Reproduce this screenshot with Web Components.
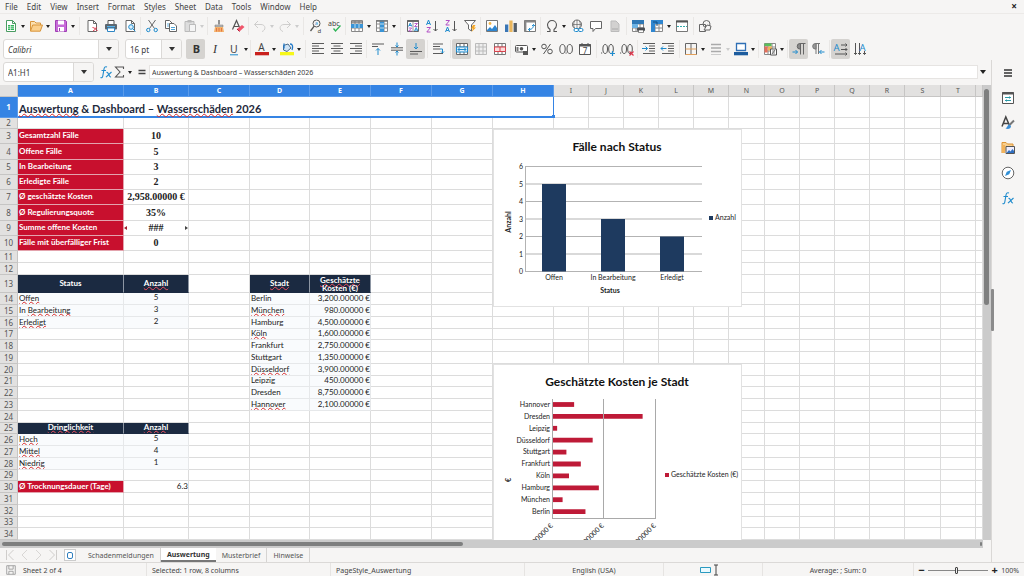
<!DOCTYPE html>
<html lang="en">
<head>
<meta charset="utf-8">
<title>Spreadsheet – Auswertung</title>
<style>
html,body{margin:0;height:100%}
body{font:8px "Noto Sans","Open Sans",sans-serif;color:#3a3a3a;background:#f6f5f4;overflow:hidden}
</style>
</head>
<body>
<app-window></app-window>
<script>
const C={g:'#5b5b5b',b:'#2f7fbf',l:'#1e8bcd',r:'#e0364c',p:'#b14fc5'};
const lines=(rows,c=C.g)=>rows.map(([x,y,w])=>`<path d="M${x} ${y}h${w}" stroke="${c}"/>`).join('');
const page='<path d="M3 1.5h5.500l3 3v8H3z" fill="#fff" stroke="#666"/><path d="M8.500 1.500v3h3" stroke="#666"/>';
const table=(c,f='#fff')=>`<path d="M1.500 1.500h11v11h-11z" fill="${f}" stroke="${c}"/><path d="M1.500 5h11M1.500 9h11M5 1.500v11M9 1.500v11" stroke="${c}"/>`;
const ICONS={
 'new':'<path d="M2.500 1.500h6l3 3v8h-9z" fill="#fff" stroke="#4a9c62"/><path d="M8.500 1.500v3h3" stroke="#4a9c62"/><path d="M4 6h6v5H4z" fill="#2fb457"/><path d="M4 7.700h6M4 9.300h6M6.500 6v5" stroke="#fff" stroke-width=".6"/>',
 open:'<path d="M1.500 12V2.500h4l1.500 1.500h4.500v2" fill="#fbe0b0" stroke="#d9963c"/><path d="M1.500 12.200L3.700 6h9.800l-2.200 6.200z" fill="#fbd08c" stroke="#d9963c"/>',
 save:'<path d="M1.500 1.500h10l1 1v10h-11z" fill="#c76bd8" stroke="#a040b5"/><path d="M4 1.500h6v4H4z" fill="#fff"/><path d="M4 8h6v4.500H4z" fill="#fff"/><path d="M5.500 9v3" stroke="#a040b5"/>',
 pdf:page+'<path d="M7.500 8.500c2 0 3.500 2 5 3.500M8 12c1.500-1 3-2 3.500-4" stroke="#e0364c"/>',
 print:'<path d="M4 5V1.500h6V5" fill="#fff" stroke="#555"/><rect x="1" y="5" width="12" height="5.500" rx="1" fill="#5d6770"/><path d="M3 7.500h8" stroke="#56b1e8"/><path d="M3.500 9h7v3.500h-7z" fill="#fff" stroke="#2f86c4"/>',
 preview:page+'<circle cx="8" cy="8" r="2.300" fill="#dff1fc" stroke="#1e8bcd"/><path d="M9.700 9.700l2.800 2.800" stroke="#1e8bcd"/>',
 cut:'<path d="M3.500 1l6 8.500M10.500 1l-6 8.500" stroke="#666"/><circle cx="3.300" cy="11" r="1.700" stroke="#1e8bcd"/><circle cx="10.700" cy="11" r="1.700" stroke="#1e8bcd"/>',
 copy:'<path d="M1.500 1.500h4l2.500 2.500v5.500H1.500z" fill="#fff" stroke="#666"/><path d="M3 5h2M3 7h2" stroke="#1e8bcd" stroke-width=".7"/><path d="M5.500 4.500h4.500l2.500 2.500v5.500h-7z" fill="#fff" stroke="#666"/><path d="M7 8.500h4M7 10.500h4" stroke="#1e8bcd" stroke-width=".8"/>',
 paste:'<path d="M2 2.500h9v10H2z" fill="#ddd" stroke="#bbb"/><path d="M4.500 1h4v2.500h-4z" fill="#bbb"/><path d="M6.500 5.500h6v7h-6z" fill="#f5f5f5" stroke="#bbb"/>',
 clone:'<path d="M7 1v4.500" stroke="#888" stroke-width="1.800"/><path d="M3 6h8v2H3z" fill="#bbb" stroke="#777" stroke-width=".5"/><path d="M3 8h8l1 5H2z" fill="#f3b36b"/><path d="M4.500 9v3.500M7 9v3.500M9.500 9v3.500" stroke="#e0623c" stroke-width=".8"/>',
 clear:'<path d="M1.500 10.500L5.500 1.500l3.500 8M3 7.500h4.500" stroke="#555" stroke-width="1.200"/><path d="M6 10l5-4 2.500 2-5 4.500z" fill="#f0566b"/><path d="M6 10l2.500 2.500" stroke="#b51f38"/>',
 undo:'<path d="M5 2L1.500 5.500 5 9M1.500 5.500H8c5 0 5 6 1 7" stroke="#cfcecd"/>',
 redo:'<path d="M9 2l3.500 3.500L9 9M12.500 5.500H6c-5 0-5 6-1 7" stroke="#cfcecd"/>',
 find:'<circle cx="7.500" cy="4.500" r="3.500" stroke="#555"/><path d="M5.200 7.200L1.500 12" stroke="#555" stroke-width="1.300"/><text x="6" y="6" font-size="5" fill="#1e8bcd">a</text><text x="8.500" y="13.500" font-size="6" fill="#444">d</text>',
 spell:'<text x="0" y="6.500" font-size="7" fill="#444">abc</text><path d="M5.500 9.500l2 2.500 5-5.500" stroke="#2fb457" stroke-width="1.300"/>',
 row:table('#888')+'<path d="M1 5h12v4H1z" fill="#3a94d6"/><path d="M1 3h12" stroke="#777" stroke-width="1.500"/><path d="M5 5v4M9 5v4" stroke="#bde"/>',
 col:table('#888')+'<path d="M5 1h4v12H5z" fill="#3a94d6"/><path d="M5 5h4M5 9h4" stroke="#bde"/><path d="M1 2h12" stroke="#777" stroke-width="1.500"/>',
 sort:'<path d="M1.500 1.500h11v11h-11z" fill="#fff" stroke="#666"/><path d="M1 2.200h12" stroke="#666" stroke-width="1.500"/><path d="M7 3v10" stroke="#999"/><path d="M2.500 7.500L4.200 4 5.800 7.500M3 6.500h2.500M8.500 12l1.700-3.500 1.600 3.500M9 11h2.500" stroke="#1e8bcd" stroke-width=".9"/><path d="M2.700 9h3l-3 3h3M8.500 4.500h3l-3 3h3" stroke="#b14fc5" stroke-width=".9"/>',
 asc:'<path d="M1.500 6L3.500 1l2 5M2.200 4.500h2.600" stroke="#1e8bcd"/><path d="M1.800 8.500h3.700l-3.700 4.500h3.700" stroke="#b14fc5"/><path d="M10.500 2v10M8.500 10l2 2 2-2" stroke="#555"/>',
 desc:'<path d="M1.500 13l2-5 2 5M2.200 11.500h2.600" stroke="#1e8bcd"/><path d="M1.800 1.500h3.700L1.800 6h3.700" stroke="#b14fc5"/><path d="M10.500 2v10M8.500 10l2 2 2-2" stroke="#555"/>',
 filter:'<path d="M1.500 1.500h11L8.500 6v6l-3-2V6z" fill="#fff" stroke="#666"/><path d="M10 6l-2 3.500h2L8.500 13 13 8.500h-2L12.500 6z" fill="#f5a623"/>',
 image:'<path d="M1.500 1.500h11v11h-11z" fill="#fff" stroke="#777"/><path d="M2 11l3-3 2 2 3-4 2 3v3H2z" fill="#2f86d0"/><circle cx="5" cy="4.500" r="1.400" fill="#f5b547"/>',
 chart:'<path d="M1 5.500h3.300V13H1z" fill="#3b76b5"/><path d="M5.300 1.500h3.300V13H5.300z" fill="#eab65c"/><path d="M9.600 4h3.300v9H9.600z" fill="#555f69"/>',
 pivot:'<path d="M1.500 1.500h11v11h-11z" fill="#fff" stroke="#777"/><path d="M1.500 2.500h11M2.500 1.500v11" stroke="#888" stroke-width="1.800"/><path d="M5.500 10.500c4 0 5-2 5-5M9 7l1.500-1.500L12 7M7 9l-1.500 1.500L7 12" stroke="#1e8bcd"/>',
 omega:'<path d="M2 12.500h3v-2C3.500 9.500 2.500 8 2.500 6a4.500 4.500 0 0 1 9 0c0 2-1 3.500-2.500 4.500v2h3" stroke="#555" stroke-width="1.100"/>',
 link:'<circle cx="7" cy="5.500" r="4.500" stroke="#666"/><path d="M2.500 5.500h9M7 1v9M4.500 2c-1 2-1 5 0 7M9.500 2c1 2 1 5 0 7" stroke="#666" stroke-width=".7"/><rect x="4" y="9.500" width="4.500" height="3" rx="1.500" fill="#fff" stroke="#1e8bcd"/><rect x="8.500" y="9.500" width="4.500" height="3" rx="1.500" fill="#fff" stroke="#1e8bcd"/>',
 comment:'<path d="M1.500 2.500h11v7H6.500l-2.500 3v-3H1.500z" fill="#fff" stroke="#666"/>',
 doc:'<path d="M3 2h5l3 3v7.500H3z" fill="#d2d1d0" stroke="#bbb"/><path d="M4 10h6" stroke="#aaa"/>',
 parea:table('#888')+'<path d="M1 1h12v4H1z" fill="#2f78b5"/><path d="M1 5h6v4H1z" fill="#6db3e4"/><rect x="6" y="8.500" width="8" height="3.500" rx="1" fill="#4a4f55"/><path d="M7.500 11h5v2.500h-5z" fill="#fff" stroke="#444" stroke-width=".6"/>',
 freeze:table('#888')+'<path d="M1 1h12v4H1z" fill="#2f86d0"/><path d="M1 5h4v8H1z" fill="#2f86d0"/><path d="M3 3h4v4" stroke="#124f80"/>',
 split:'<path d="M1.500 2h11v10.500h-11z" fill="#fff" stroke="#777"/><path d="M1 2.500h12" stroke="#555" stroke-width="2"/><path d="M2 7.500h10" stroke="#3aa" stroke-dasharray="2 1"/>',
 shapes:'<path d="M1.500 5.500h6v7h-6z" stroke="#666"/><circle cx="8.500" cy="5" r="3.500" stroke="#666"/><path d="M6 11l3-5 4 1-1 4z" fill="#f6f5f4" stroke="#666"/>',
 bold:'<text x="3.700" y="11" font-size="11" font-weight="bold" fill="#333">B</text>',
 italic:'<text x="5" y="11" font-size="12" font-style="italic" fill="#333" style="font-family:Liberation Serif">I</text>',
 under:'<text x="3" y="10.500" font-size="10.500" fill="#444">U</text><path d="M3 12.800h8" stroke="#1e8bcd"/>',
 acolor:'<text x="3.300" y="8.700" font-size="10" fill="#444">A</text><path d="M0 10h14v3.300H0z" fill="#c9211e"/>',
 hcolor:'<path d="M3.500 8V3.500L8 2l3 4-4 3.500z" fill="#cfe3f4" stroke="#4a6a8a"/><path d="M4 1.500v5M10 2c3 0 3 3 2 6" stroke="#1e78c8" stroke-width="1.300"/><path d="M0 10h14v3.300H0z" fill="#f7f719"/>',
 left:lines([[1,1.5,12],[1,4,7],[1,6.5,12],[1,9,7],[1,11.5,12]]),
 center:lines([[1,1.5,12],[3.5,4,7],[1,6.5,12],[3.5,9,7],[1,11.5,12]]),
 right:lines([[1,1.5,12],[6,4,7],[1,6.5,12],[6,9,7],[1,11.5,12]]),
 top:lines([[1,2,12],[1,4.5,6]])+'<path d="M7 13V6.500M5 8.500l2-2 2 2" stroke="#1e8bcd"/>',
 mid:lines([[1,5.8,12],[1,8.2,12]])+'<path d="M7 .5V5M5.500 3.500L7 5l1.500-1.500M7 13.500V9M5.500 10.500L7 9l1.500 1.500" stroke="#1e8bcd"/>',
 bot:lines([[1,9.5,12],[1,12,8]])+'<path d="M7 1v6M5 5l2 2 2-2" stroke="#1e8bcd"/>',
 wrap:lines([[1,2,10],[1,4.5,7],[1,7,7],[1,11.5,10]])+'<path d="M8 7h2.500v4M9 9.500l1.500 1.500 1.500-1.500" stroke="#1e8bcd"/>',
 merge:table('#666')+'<path d="M1.500 5h11v5h-11z" fill="#dff0fb" stroke="#1e8bcd"/><path d="M3 7.500h8M4.500 6L3 7.500 4.500 9M9.500 6L11 7.500 9.500 9" stroke="#1e8bcd"/>',
 merge2:table('#bbb','#eee'),
 unmerge:table('#777')+'<path d="M1.500 5h11v4.500h-11zM7 5v4.500" fill="#fbdcdc" stroke="#d8424c"/>',
 money:'<rect x=".5" y="3.500" width="12" height="6.500" rx="1" fill="#fff" stroke="#555"/><circle cx="6.500" cy="6.700" r="1.800" fill="#555"/><path d="M8 9h5v4H8z" fill="#555"/><path d="M1.500 5v4h2V5z" fill="#777"/>',
 percent:'<circle cx="4" cy="4.500" r="2.300" stroke="#555"/><circle cx="10" cy="9.500" r="2.300" stroke="#555"/><path d="M10.500 2L3.500 12" stroke="#555"/>',
 decimal:'<ellipse cx="3.500" cy="7" rx="2.700" ry="4.500" stroke="#555"/><ellipse cx="10.700" cy="7" rx="2.700" ry="4.500" stroke="#555"/><path d="M6.500 11h1.200" stroke="#555"/>',
 date:'<path d="M1.500 2.500h11v10h-11z" fill="#fff" stroke="#555"/><path d="M1 3.500h12" stroke="#555" stroke-width="2"/><path d="M4 1v2M10 1v2" stroke="#555"/><text x="4.800" y="11.500" font-size="8" fill="#444">7</text>',
 adddec:'<ellipse cx="4.200" cy="7" rx="2.300" ry="4.500" stroke="#555"/><ellipse cx="10" cy="7" rx="2.300" ry="4.500" stroke="#555"/><path d="M0 11h1.200" stroke="#555"/><path d="M9 11.500h5M11.500 9v5" stroke="#1e8bcd" stroke-width="1.200"/>',
 deldec:'<ellipse cx="4.200" cy="7" rx="2.300" ry="4.500" stroke="#555"/><ellipse cx="10" cy="7" rx="2.300" ry="4.500" stroke="#555"/><path d="M0 11h1.200" stroke="#555"/><path d="M9.500 9.500l4 4M13.500 9.500l-4 4" stroke="#e0364c" stroke-width="1.200"/>',
 indent:lines([[1,1.5,12],[7,4,6],[7,6.5,6],[7,9,6],[1,11.5,12]])+'<path d="M0 6.500h5.500M3.500 4.500l2 2-2 2" stroke="#1e8bcd"/>',
 dedent:lines([[1,1.5,12],[7,4,6],[7,6.5,6],[7,9,6],[1,11.5,12]])+'<path d="M5.500 6.500H0M2 4.500l-2 2 2 2" stroke="#1e8bcd"/>',
 borders:'<path d="M1.500 1.500h11v11h-11zM7 1.500v11" stroke="#666"/><path d="M1.500 7h11M1.500 12.500h11" stroke="#e3a05a"/>',
 bstyle:'<path d="M2 2.500h10M2 6h10M2 9.500h10" stroke="#aaa" stroke-width="1.500"/><path d="M2 12.500h10" stroke="#ccc"/>',
 bcolor:'<path d="M2.500 1.500h9v7h-9z" fill="#fff" stroke="#2f6fb5" stroke-width="1.300"/><path d="M0 10h14v3.300H0z" fill="#1d5c9e"/>',
 cond:table('#888')+'<path d="M1.500 1.500h7v2.500h-7z" fill="#5bbf5b"/><path d="M1.500 4.500h3v6h-3z" fill="#e86f5b"/><path d="M5 4.500h4v4H5z" fill="#f0b45b"/><path d="M7.500 7h6v6h-6z" fill="#fff" stroke="#555"/><path d="M9 9h3M9 11h3M12 8l-3 4" stroke="#555" stroke-width=".7"/>',
 ltr:'<path d="M8.500 12.500V1.500M11.500 12.500V1.500M13.500 1.500H8" stroke="#666"/><path d="M8.500 1.500H8a2.800 2.800 0 0 0 0 5.600h.5z" fill="#888" stroke="#666"/><path d="M.5 10h5M3.500 8l2 2-2 2" stroke="#1e8bcd"/>',
 rtl:'<path d="M5 12V1.500M7.500 12V1.500M9 1.500H4.500" stroke="#777"/><path d="M5 1.500h-.5a2.800 2.800 0 0 0 0 5.600H5z" fill="#999" stroke="#777"/><path d="M13.500 10h-5M10.500 8l-2 2 2 2" stroke="#1e8bcd"/>',
 hdir:'<text x="-.5" y="9" font-size="9.500" fill="#1e8bcd">A</text><path d="M7 3h6M11.500 1.500L13 3l-1.500 1.500M7 7.500h6M11.500 6L13 7.500 11.500 9M1 12h12M11.500 10.500L13 12l-1.500 1.500" stroke="#555"/>',
 vdir:'<path d="M2.500 1v11.500M1 11l1.500 1.500L4 11M6.500 1v11.500M5 11l1.500 1.500L8 11M11.500 9v3.500M10 11l1.500 1.500L13 11" stroke="#555"/><text x="6.500" y="8.500" font-size="9.500" fill="#1e8bcd">A</text>',
 fx:'<path d="M8 2c-2-.8-2.700.3-3 2L3.800 11c-.3 1.500-1 2-2.300 1.500M2.500 5.500h4.500" stroke="#1e8bcd" stroke-width="1.100"/><path d="M7.500 7.500c2-1 2.500 5 4.500 4.500M12.500 7L7 12.200" stroke="#1e8bcd" stroke-width="1.100"/>',
 sum:'<path d="M10.500 4V2h-8L7 7l-4.500 5h8v-2" stroke="#555" stroke-width="1.100"/>',
 eq:'<path d="M3.500 5.500h7M3.500 8.500h7" stroke="#444" stroke-width="1.300"/>',
 menu:'<path d="M3 4h8M3 7h8M3 10h8" stroke="#333" stroke-width="1.300"/>',
 props:'<path d="M1.500 1.500h11v11h-11z" fill="#fff" stroke="#555"/><path d="M1 2.500h12" stroke="#555" stroke-width="2"/><path d="M4 6.500h6M4 9.500h6M8.500 5.500v2M5.500 8.500v2" stroke="#2a9aa8"/>',
 styles:'<path d="M1 10.500L4.800 1l3.500 8M2.500 7.500h5" stroke="#444" stroke-width="1.500"/><path d="M13 4.500L8.500 9" stroke="#777" stroke-width="2"/><path d="M8.500 8.500c-2 0-2 3-4 4 3 1 5.500 0 5.500-2.500z" fill="#3b8ed6"/>',
 gallery:'<path d="M1 12V1.500h4L6.500 3H12v2" fill="#f8cf8e" stroke="#dd9434"/><path d="M1 12V4h3v8z" fill="#f3b35b"/><path d="M5 5.500h8.500v7H5z" fill="#eef" stroke="#555"/><path d="M5.500 12l2.500-3 1.500 1.500L11.500 8l1.500 2v2z" fill="#2f6fc0"/>',
 nav:'<circle cx="7" cy="7" r="5.800" fill="#fff" stroke="#666"/><path d="M10 4L8.200 8.200 4 10l1.800-4.200z" fill="#2f8fd6"/>',
 disk:'<path d="M2 2h10v10H2z" stroke="#999"/><path d="M4.500 2v4h5V2M4.500 12V8.500h5V12" stroke="#999"/>',
 sel:'<path d="M1.500 4.500h10v5h-10z" fill="#eafaff" stroke="#2a9ac0"/>',
 ibeam:'<path d="M1 2h4M1 12h4M3 2v10" stroke="#444"/>',
 first:'<path d="M2.500 2v10M9.500 2l-5 5 5 5" stroke="#cfcdcb"/>',
 prev:'<path d="M9 2L4 7l5 5" stroke="#d8d6d4"/>',
 next:'<path d="M5 2l5 5-5 5" stroke="#d8d6d4"/>',
 last:'<path d="M11.500 2v10M4.500 2l5 5-5 5" stroke="#cfcdcb"/>',
};

const define=(name,css,html)=>{
 customElements.define(name,class extends HTMLElement{
  connectedCallback(){
   if(this.shadowRoot)return;
   const tpl=document.createElement('template');
   tpl.innerHTML=`<style>*{box-sizing:border-box}button,input{font:inherit;color:inherit;border:0;padding:0;margin:0;background:none;min-width:0}${css}</style>${typeof html==='function'?html(this):html}`;
   this.attachShadow({mode:'open'}).append(tpl.content.cloneNode(true));
  }
 });
};

define('ui-icon',':host{display:block;flex:none;width:14px;height:14px}svg{display:block;width:100%;height:100%;overflow:visible}text{font-family:"Noto Sans";stroke:none}',
 el=>`<svg viewBox="0 0 14 14" fill="none" aria-hidden="true">${ICONS[el.getAttribute('name')]||''}</svg>`);

define('tool-button',`:host{display:flex;flex:none;align-items:center;width:19px}
:host([menu]){width:25px}
.b{width:19px;height:20px;display:grid;place-items:center;border-radius:2px}
:host([active]) .b{background:#d5d3d0}
.m{width:6px;height:20px;display:grid;place-items:center}
.m::after{content:"";border:2px solid transparent;border-top:3px solid #222;border-bottom:0}
:host([off]) .m::after{border-top-color:#ccc}`,
 el=>{const l=el.getAttribute('label');return `<button class="b" aria-label="${l}"><ui-icon name="${el.getAttribute('icon')}"></ui-icon></button>${el.hasAttribute('menu')?`<button class="m" aria-label="${l}: options"></button>`:''}`});

define('tool-separator',':host{display:flex;flex:none;width:4px;height:18px;justify-content:center}:host([narrow]){width:3px}:host([wide]){width:6px}i{width:1px;background:#e9e7e5}','<i></i>');

define('combo-box',`:host{display:flex;flex:none;height:20px;width:var(--w,116px);background:#fff;border:1px solid #dbd9d7;border-radius:3px;overflow:hidden}
input{flex:1;padding:0 4px;outline:0}
button{width:20px;background:#f6f5f4;border-left:1px solid #dbd9d7;display:grid;place-items:center}
button::after{content:"";border:3px solid transparent;border-top:4px solid #333;border-bottom:0}`,
 el=>`<input aria-label="${el.getAttribute('label')}" value="${el.getAttribute('value')}"><button aria-label="${el.getAttribute('label')}: list"></button>`);

define('menu-bar',`:host{display:flex;flex:none;height:14px;align-items:center;padding:0 5px;border-bottom:1px solid #eceae8}
nav{display:flex;gap:9px;flex:1}button{height:13px;line-height:13px;color:#444}.x{width:10px;font-weight:bold;font-size:10px;color:#222}`,
 `<nav>${['File','Edit','View','Insert','Format','Styles','Sheet','Data','Tools','Window','Help'].map(t=>`<button>${t}</button>`).join('')}</nav><button class="x" aria-label="Close">×</button>`);

const B=(icon,label,o='')=>`<tool-button icon="${icon}" label="${label}" ${o}></tool-button>`;
const S=(o='')=>`<tool-separator ${o}></tool-separator>`;
const bar=':host{display:flex;align-items:center;flex:none;overflow:hidden}';
define('standard-toolbar',bar+':host{height:24px;padding-left:1px}',
 B('new','New','menu')+B('open','Open','menu')+B('save','Save','menu')+S('wide')+
 B('pdf','Export PDF')+B('print','Print')+B('preview','Preview')+S('narrow')+
 B('cut','Cut')+B('copy','Copy')+B('paste','Paste','menu off')+S()+B('clone','Clone formatting')+B('clear','Clear formatting')+S('narrow')+
 B('undo','Undo','menu off')+B('redo','Redo','menu off')+S('wide')+B('find','Find')+B('spell','Spelling')+S('narrow')+
 B('row','Row','menu')+B('col','Column','menu')+S('wide')+B('sort','Sort')+B('asc','Sort ascending')+B('desc','Sort descending')+B('filter','AutoFilter')+S('narrow')+
 B('image','Image')+B('chart','Chart')+B('pivot','Pivot table')+S('narrow')+B('omega','Symbol','menu')+B('link','Link')+B('comment','Comment')+B('doc','Header and footer')+S()+
 B('parea','Print area')+B('freeze','Freeze','menu')+B('split','Split window')+S()+B('shapes','Shapes'));
define('format-toolbar',bar+':host{height:22px;padding-left:3px}.size{--w:57px;margin:0 4px 0 6px}.name{font-style:italic}',
 `<combo-box class="name" label="Font name" value="Calibri"></combo-box><combo-box class="size" label="Font size" value="16 pt"></combo-box>`+
 B('bold','Bold','active')+B('italic','Italic')+B('under','Underline','menu')+S('narrow')+B('acolor','Font color','menu')+B('hcolor','Background color','menu')+S('wide')+
 B('left','Align left')+B('center','Center')+B('right','Align right')+S('narrow')+B('top','Align top')+B('mid','Center vertically')+B('bot','Align bottom','active')+S()+
 B('wrap','Wrap text')+S()+B('merge','Merge and center','active')+B('merge2','Merge')+B('unmerge','Unmerge')+S('narrow')+
 B('money','Currency','menu')+B('percent','Percent')+B('decimal','Number')+B('date','Date')+S()+B('adddec','Add decimal')+B('deldec','Delete decimal')+S('narrow')+
 B('indent','Increase indent')+B('dedent','Decrease indent')+S()+B('borders','Borders','menu')+B('bstyle','Border style','menu off')+B('bcolor','Border color','menu')+S()+
 B('cond','Conditional','menu')+S()+B('ltr','Left to right','active')+B('rtl','Right to left')+S()+B('hdir','Horizontal text','active')+B('vdir','Vertical text'));

define('formula-bar',`:host{display:flex;align-items:center;flex:none;height:25px;padding:0 3px 1px}
combo-box{--w:91px;margin-right:5px}.t{display:flex;align-items:center;width:14px;height:14px}.m{width:6px;height:14px;display:grid;place-items:center;margin-right:2px}
.m::after,.e::after{content:"";border:2px solid transparent;border-top:3px solid #222;border-bottom:0}
input{flex:1;height:14px;background:#fff;border:1px solid #e6e4e2;padding:0 2px;font-size:7px;outline:0}
.e{width:10px;height:14px;display:grid;place-items:center}.e::after{border-width:4px 3px 0}`,
 `<combo-box label="Name box" value="A1:H1"></combo-box><button class="t" aria-label="Function wizard"><ui-icon name="fx"></ui-icon></button><button class="t" aria-label="Sum"><ui-icon name="sum"></ui-icon></button><button class="m" aria-label="Sum: options"></button><button class="t" aria-label="Formula"><ui-icon name="eq"></ui-icon></button><input aria-label="Formula" value="Auswertung &amp; Dashboard – Wasserschäden 2026"><button class="e" aria-label="Expand"></button>`);

/* ---- sheet ---- */
const u=t=>`<u>${t}</u>`;
const COLS=[18,106,65,61,60,61,61,61,61,35,35,35,35,35,36,35,35,35,35,36,35];
const LET='ABCDEFGHIJKLMNOPQRST';
const rowH=r=>r===1?21:r===2?11:r<=10?([4,8].includes(r)?16:15):r===13?18:[17,21,25,29,33].includes(r)?11:12;
const cells={};
const put=(a,c,t)=>cells[a]=[c,t];
[['Gesamtzahl Fälle','10'],['Offene Fälle','5'],['In Bearbeitung','3'],['Erledigte Fälle','2'],['Ø geschätzte Kosten','2,958.00000 €'],['Ø Regulierungsquote','35%'],['Summe offene Kosten','<s></s>###<s class="r"></s>'],['Fälle mit überfälliger Frist','0']].forEach(([a,b],i)=>{put('A'+(i+3),'red',a);put('B'+(i+3),'kpi',b)});
put('A13','navy','Status');put('B13','navy',u('Anzahl'));put('D13','navy',u('Stadt'));put('E13','navy two',u('Geschätzte')+'<br>'+u('Kosten')+' (€)');
[[u('Offen'),5],['In '+u('Bearbeitung'),3],[u('Erledigt'),2]].forEach(([a,b],i)=>{put('A'+(14+i),'band',a);put('B'+(14+i),'band c',b)});
[['Berlin','3,200'],[u('München'),'980'],['Hamburg','4,500'],[u('Köln'),'1,600'],['Frankfurt','2,750'],['Stuttgart','1,350'],[u('Düsseldorf'),'3,900'],['Leipzig','450'],['Dresden','8,750'],[u('Hannover'),'2,100']].forEach(([a,b],i)=>{put('D'+(14+i),'band',a);put('E'+(14+i),'band n',b+'.00000 €')});
put('A25','navy',u('Dringlichkeit'));put('B25','navy',u('Anzahl'));
[['Hoch',5],['Mittel',4],['Niedrig',1]].forEach(([a,b],i)=>{put('A'+(26+i),'band',u(a));put('B'+(26+i),'band c',b)});
put('A30','red','Ø Trocknungsdauer (Tage)');put('B30','n','6.3');

const sheetRows=()=>{let h='';for(let r=1;r<=34;r++){
 h+=`<tr style="height:${rowH(r)}px"><th scope="row"${r===1?' class="on"':''}>${r}</th>`;
 if(r===1)h+=`<td colspan="8" class="title">${u('Auswertung')} &amp; Dashboard – ${u('Wasserschäden')} 2026<b></b></td>`;
 for(let c=r===1?8:0;c<20;c++){const k=cells[LET[c]+r];h+=k?`<td class="${k[0]}">${k[1]}</td>`:'<td></td>'}
 h+='<td></td></tr>'}return h};

define('sheet-grid',`:host{display:block;position:relative;overflow:hidden;background:#fff;font:8px Lato,sans-serif;color:#222}
table{table-layout:fixed;width:100%;border-collapse:separate;border-spacing:0}
tr{height:12px}
th,td{padding:0 0 1px;border:0 solid #dcdcdc;border-width:0 1px 1px 0;line-height:9px;white-space:nowrap;vertical-align:middle;text-align:left;overflow:hidden}
th{background:#e2e1e0;color:#555;font:8px/9px "Noto Sans",sans-serif;text-align:center;border-color:#c6c5c4}
thead th{font-size:7px;padding:0}
th.on{background:#3584e4;color:#fff;font-weight:bold;border-color:#5b9bea}
u{text-decoration:underline wavy #d92b2b 1px;text-underline-offset:0;text-decoration-skip-ink:none}
.title{font-size:11px;line-height:14px;font-weight:bold;color:#1e293b;padding:4px 0 0 1px;border-bottom:2px solid #3584e4;border-right:1px solid #3584e4;position:relative;overflow:visible}
.title b{position:absolute;right:-2px;bottom:-2px;width:3px;height:3px;background:#3584e4}
.red{background:#c8102e;color:#fff;font-weight:bold;border-color:#e3a3ad;padding-left:1px}
.kpi{font:bold 10px/12px "Liberation Serif",serif;text-align:center;position:relative;color:#222;padding:0}
.navy{background:#1b2a41;color:#fff;font-weight:bold;text-align:center;border-color:#1b2a41 #8d96a3}
.navy u{text-decoration-color:#f05060}
.two{line-height:8px;padding:0}
.band{background:#f9fbfd;padding-left:1px;border-color:#e6e8ea}
.c{text-align:center;padding:0 0 2px}.n{text-align:right}
s{position:absolute;left:0;top:5px;border:2px solid transparent;border-right:3px solid #a01c2c;border-left:0}
s.r{left:auto;right:0;border-right:0;border-left:3px solid #444}`,
 ()=>`<table><colgroup>${COLS.map(w=>`<col style="width:${w}px">`).join('')}<col></colgroup><thead><tr><th></th>${[...LET].map((l,i)=>`<th scope="col"${i<8?' class="on"':''}>${l}</th>`).join('')}<th></th></tr></thead><tbody>${sheetRows()}</tbody></table><slot></slot>`);

/* ---- charts: floating objects anchored on the sheet ---- */
const chartCss=`:host{display:block;position:absolute;background:#fff;border:1px solid #e2e2e2}svg{display:block;overflow:hidden}
text{font-family:Lato,sans-serif;font-size:7px;fill:#222}.t{font-size:12px;font-weight:bold;text-anchor:middle;fill:#111}.b{font-weight:bold}.m{text-anchor:middle}.e{text-anchor:end}`;
define('status-chart',chartCss+':host{left:493px;top:44px}',()=>{
 let s='';for(let i=0;i<=6;i++){const y=141.5-i*17.5;s+=`<path d="M31 ${y}h177" stroke="#b3b3b3"/><text class="e" x="29" y="${y+2.5}">${i}</text>`}
 [['Offen',5,60],['In Bearbeitung',3,119],['Erledigt',2,178]].forEach(([l,v,x])=>{s+=`<path d="M${x-12} ${141.5-v*17.5}h24V141.500h-24z" fill="#1e3a5f"/><text class="m" x="${x}" y="150">${l}</text>`});
 return `<svg width="247" height="176" viewBox="0 0 247 176" role="img" aria-label="Fälle nach Status"><text class="t" x="123" y="21">Fälle nach Status</text>${s}<path d="M31.500 36v105" stroke="#b3b3b3"/><text class="b m" x="116" y="163">Status</text><text class="b m" transform="translate(17 92) rotate(-90)">Anzahl</text><path d="M215 86h4v4h-4z" fill="#1e3a5f"/><text x="221" y="90">Anzahl</text></svg>`});
define('cost-chart',chartCss+':host{left:493px;top:279px}',()=>{
 const d=[['Hannover',2100],['Dresden',8750],['Leipzig',450],['Düsseldorf',3900],['Stuttgart',1350],['Frankfurt',2750],['Köln',1600],['Hamburg',4500],['München',980],['Berlin',3200]];
 let g='',s='';['0','5,000','10,000'].forEach((l,i)=>{const x=[58.5,109.5,161.5][i];g+=`<path d="M${x} 34v119" stroke="#a9a9a9"/><text class="e" transform="translate(${x+1} 161) rotate(-45)">${l}.00000 €</text>`});
 d.forEach(([l,v],i)=>{const y=39.5+i*11.9;s+=`<path d="M58.500 ${y-2.4}h${v*.0103}v4.800h-${v*.0103}z" fill="#be1a37"/><text class="e" x="56" y="${y+2.3}">${l}</text>`});
 return `<svg width="247" height="230" viewBox="0 0 247 230" role="img" aria-label="Geschätzte Kosten je Stadt"><text class="t" x="123" y="21">Geschätzte Kosten je Stadt</text>${s}${g}<path d="M58 153.500h104" stroke="#a9a9a9"/><text class="b m" transform="translate(17 115) rotate(-90)">€</text><path d="M171 108h4v4h-4z" fill="#be1a37"/><text x="177" y="112">Geschätzte Kosten (€)</text></svg>`});

define('scroll-bar',`:host{display:flex;background:#cbcbcb}i{background:#7e7f7f;border-radius:3px}
:host([dir=v]){flex-direction:column;width:8px;padding:4px 2px 0 1px}:host([dir=v]) i{height:48%}
:host([dir=h]){height:8px;padding:2px 1px 2px 2px;justify-content:space-between}:host([dir=h]) i{width:47%}:host([dir=h]) i+i{width:2px}`,
 el=>el.getAttribute('dir')==='h'?'<i></i><i></i>':'<i></i>');

define('sheet-tabs',`:host{display:flex;flex:none;height:14px;align-items:stretch;font-size:7px;color:#555}
.nav{display:flex;align-items:center;justify-content:space-between;width:58px;padding:0 0 0 4px}
.add{width:12px;margin:1px 0 1px 6px;background:#fff;border:1px solid #ccc;display:grid;place-items:center}.add::after{content:"";width:4px;height:5px;border:1px solid #2f7fbf;border-radius:2px}
[role=tablist]{display:flex;margin-left:6px}[role=tab]{padding:0 6px;line-height:13px;border-right:1px solid #d6d4d2}
[aria-selected=true]{font-weight:bold;background:#fff;color:#333;border-right:0;border-bottom:2px solid #777}`,
 `<div class="nav">${[['first','First sheet'],['prev','Previous sheet'],['next','Next sheet'],['last','Last sheet']].map(([i,l])=>`<button aria-label="${l}"><ui-icon name="${i}"></ui-icon></button>`).join('')}</div><button class="add" aria-label="Add sheet"></button><div role="tablist"><button role="tab">Schadenmeldungen</button><button role="tab" aria-selected="true">Auswertung</button><button role="tab">Musterbrief</button><button role="tab">Hinweise</button></div>`);

define('side-bar',`:host{display:flex;flex-direction:column;align-items:center;width:33px;border-left:1px solid #dad8d6;position:relative}
button{width:25px;height:25px;display:grid;place-items:center}.h{position:absolute;left:-1px;top:229px;width:3px;height:42px;padding:0;background:#8b8b8b;border-radius:1px}`,
 [['menu','Sidebar settings'],['props','Properties'],['styles','Styles'],['gallery','Gallery'],['nav','Navigator'],['fx','Functions']].map(([i,l])=>`<button aria-label="${l}"><ui-icon name="${i}"></ui-icon></button>`).join('')+'<button class="h" aria-label="Hide sidebar"></button>');

define('status-bar',`:host{display:grid;flex:none;grid-template-columns:minmax(0,147fr) minmax(0,184fr) minmax(0,194fr) minmax(0,139fr) minmax(0,99fr) minmax(0,151fr) minmax(0,110fr);height:14px;border-top:1px solid #dbd9d7;font-size:7px;line-height:13px;color:#444}
div{display:flex;align-items:center;padding:0 5px;border-right:1px solid #e6e4e2;white-space:nowrap}div:last-child{border:0;padding:0 5px 0 4px;gap:3px}
.c{justify-content:center}.i{justify-content:center}.s{gap:6px}
.z{width:7px;font-size:11px;line-height:10px;font-weight:bold;color:#222}
input[type=range]{appearance:none;flex:1;height:9px}input::-webkit-slider-runnable-track{height:1px;background:#888}input::-webkit-slider-thumb{appearance:none;width:3px;height:7px;margin-top:-3px;background:#eee;border:1px solid #444;border-radius:1px}`,
 `<div class="s"><ui-icon name="disk" style="width:12px;height:12px"></ui-icon>Sheet 2 of 4</div><div>Selected: 1 row, 8 columns</div><div>PageStyle_Auswertung</div><div class="c">English (USA)</div><div class="i"><ui-icon name="sel"></ui-icon><ui-icon name="ibeam"></ui-icon></div><div class="c">Average: ; Sum: 0</div><div><button class="z" aria-label="Zoom out">−</button><input type="range" aria-label="Zoom" value="48"><button class="z" aria-label="Zoom in">+</button><span>100%</span></div>`);

define('app-window',`:host{display:flex;flex-direction:column;height:100vh;overflow:hidden}
main{flex:1;min-height:0;display:flex}.left{flex:1;min-width:0;display:flex;flex-direction:column}
.area{flex:1;min-height:0;display:grid;grid-template:minmax(0,1fr) 8px/minmax(0,1fr) 8px}`,
 `<menu-bar></menu-bar><standard-toolbar></standard-toolbar><format-toolbar></format-toolbar>
<main><div class="left"><formula-bar></formula-bar><div class="area"><sheet-grid><status-chart></status-chart><cost-chart></cost-chart></sheet-grid><scroll-bar dir="v"></scroll-bar><scroll-bar dir="h"></scroll-bar></div><sheet-tabs></sheet-tabs></div><side-bar></side-bar></main><status-bar></status-bar>`);
</script>
</body>
</html>
